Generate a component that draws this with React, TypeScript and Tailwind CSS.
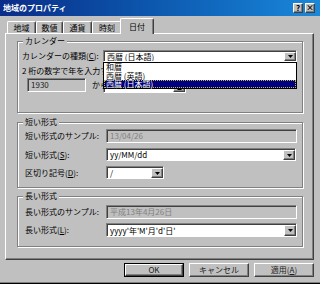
import React from 'react';

const raised =
  'border border-t-white border-l-white border-r-[#404040] border-b-[#404040] shadow-[inset_-1px_-1px_0_#808080]';
const sunken =
  'border border-t-[#808080] border-l-[#808080] border-r-white border-b-white shadow-[inset_1px_1px_0_#404040]';

const Arrow: React.FC = () => (
  <span className={`${raised} w-[12px] h-full bg-[#c0c0c0] flex items-center justify-center shrink-0`}>
    <svg width="5" height="3" viewBox="0 0 5 3">
      <polygon points="0,0 5,0 2.5,3" fill="#000" />
    </svg>
  </span>
);

const Combo: React.FC<{ value: string; className: string }> = ({ value, className }) => (
  <div className={`${sunken} bg-white flex items-stretch pt-px pl-px ${className}`}>
    <span className="flex-1 flex items-center pl-[2px] whitespace-nowrap overflow-hidden">{value}</span>
    <Arrow />
  </div>
);

const Field: React.FC<{ value: string; className: string; dim?: boolean }> = ({ value, className, dim }) => (
  <div
    className={`${sunken} bg-[#c0c0c0] flex items-center pl-[3px] whitespace-nowrap overflow-hidden ${
      dim ? 'text-[#808080]' : 'text-[#202020]'
    } ${className}`}
  >
    {value}
  </div>
);

const Group: React.FC<{ title: string; className: string; children: React.ReactNode }> = ({
  title,
  className,
  children,
}) => (
  <div className={`relative border border-[#808080] shadow-[inset_1px_1px_0_#fff,1px_1px_0_#fff] ${className}`}>
    <span className="absolute -top-[5px] left-[5px] px-[2px] bg-[#c0c0c0] leading-none">{title}</span>
    {children}
  </div>
);

const TitleBtn: React.FC<{ children: React.ReactNode }> = ({ children }) => (
  <span
    className={`${raised} w-[10px] h-[10px] bg-[#c0c0c0] flex items-center justify-center text-[8px] font-bold leading-none text-black`}
  >
    {children}
  </span>
);

const Button: React.FC<{ children: React.ReactNode; main?: boolean }> = ({ children, main }) => (
  <div className={main ? 'border border-black w-[60px]' : 'w-[60px]'}>
    <div className={`${raised} h-full bg-[#c0c0c0] flex items-center justify-center text-[#202020]`}>
      {children}
    </div>
  </div>
);

export default function App() {
  const tabs = [
    { label: '地域', w: 'w-[29px]' },
    { label: '数値', w: 'w-[27px]' },
    { label: '通貨', w: 'w-[29px]' },
    { label: '時刻', w: 'w-[30px]' },
  ];

  return (
    <div className="relative w-[320px] h-[284px] overflow-hidden bg-[#c0c0c0] flex flex-col text-[8px] leading-none text-black font-['Noto_Sans_CJK_JP','Noto_Sans',sans-serif] border-b border-b-black shadow-[inset_0_-1px_0_#808080]">
      {/* title bar */}
      <div className="h-[16px] bg-linear-to-r from-[#0b2c88] to-[#1a88da] flex items-center justify-between pl-[3px] pr-[5px] shrink-0">
        <span className="text-white font-bold">地域のプロパティ</span>
        <div className="flex gap-[2px]">
          <TitleBtn>?</TitleBtn>
          <TitleBtn>×</TitleBtn>
        </div>
      </div>

      {/* tabs */}
      <div className="mt-[2px] pl-[7px] h-[15px] flex items-end shrink-0">
        {tabs.map((t) => (
          <div
            key={t.label}
            className={`${t.w} h-[12px] border-t border-l border-r border-t-white border-l-white border-r-[#404040] shadow-[inset_-1px_0_0_#808080] rounded-t-[2px] flex items-center justify-center`}
          >
            {t.label}
          </div>
        ))}
        <div className="relative z-10 -ml-[2px] -mb-px w-[34px] h-[16px] bg-[#c0c0c0] border-t border-l border-r border-t-white border-l-white border-r-[#404040] shadow-[inset_-1px_0_0_#808080] rounded-t-[2px] flex items-center justify-center">
          日付
        </div>
      </div>

      {/* panel */}
      <div className="ml-[5px] w-[309px] h-[227px] shrink-0 border border-t-white border-l-white border-r-[#404040] border-b-[#404040] shadow-[inset_-1px_-1px_0_#808080] pl-[11px] pt-[7px] flex flex-col">
        <Group title="カレンダー" className="w-[286px] h-[72px]">
          <div className="mt-[8px] h-[12px] flex items-center pl-[4px]">
            <span className="w-[81px] whitespace-nowrap">
              カレンダーの種類(<u>C</u>):
            </span>
            <Combo value="西暦 (日本語)" className="w-[194px] h-[12px]" />
          </div>
          <div className="mt-[3px] h-[12px] flex items-center pl-[4px]">
            <span className="w-[81px] whitespace-nowrap overflow-hidden">
              2 桁の数字で年を入力すると、次の範囲の年として解釈します:
            </span>
          </div>
          <div className="mt-[1px] h-[14px] flex items-center pl-[9px]">
            <Field value="1930" className="w-[59px] h-[14px]" />
            <span className="ml-[6px] w-[11px] whitespace-nowrap overflow-hidden">から</span>
            <div className={`${sunken} w-[83px] h-[15px] bg-white flex items-stretch justify-end pt-px`}>
              <span className={`${raised} w-[12px] bg-[#c0c0c0] flex items-end justify-center pb-px`}>
                <svg width="5" height="3" viewBox="0 0 5 3">
                  <polygon points="2.5,0 5,3 0,3" fill="#000" />
                </svg>
              </span>
            </div>
          </div>
        </Group>

        <Group title="短い形式" className="mt-[9px] w-[286px] h-[66px]">
          <div className="mt-[6px] h-[14px] flex items-center pl-[7px]">
            <span className="w-[81px] whitespace-nowrap">短い形式のサンプル:</span>
            <Field value="13/04/26" dim className="w-[191px] h-[14px]" />
          </div>
          <div className="mt-[5px] h-[13px] flex items-center pl-[7px]">
            <span className="w-[81px] whitespace-nowrap">
              短い形式(<u>S</u>):
            </span>
            <Combo value="yy/MM/dd" className="w-[190px] h-[13px]" />
          </div>
          <div className="mt-[5px] h-[13px] flex items-center pl-[7px]">
            <span className="w-[81px] whitespace-nowrap">
              区切り記号(<u>D</u>):
            </span>
            <Combo value="/" className="w-[58px] h-[13px]" />
          </div>
        </Group>

        <Group title="長い形式" className="mt-[8px] w-[286px] h-[51px]">
          <div className="mt-[8px] h-[14px] flex items-center pl-[7px]">
            <span className="w-[81px] whitespace-nowrap">長い形式のサンプル:</span>
            <Field value="平成13年4月26日" dim className="w-[191px] h-[14px]" />
          </div>
          <div className="mt-[4px] h-[14px] flex items-center pl-[7px]">
            <span className="w-[81px] whitespace-nowrap">
              長い形式(<u>L</u>):
            </span>
            <Combo value="yyyy'年'M'月'd'日'" className="w-[191px] h-[14px]" />
          </div>
        </Group>
      </div>

      {/* buttons */}
      <div className="mt-[3px] h-[14px] flex justify-end gap-[5px] pr-[6px] shrink-0">
        <Button main>OK</Button>
        <Button>キャンセル</Button>
        <Button>
          適用(<u>A</u>)
        </Button>
      </div>

      {/* open dropdown list */}
      <div className="absolute left-[103px] top-[62px] w-[194px] h-[27px] bg-white border border-black flex flex-col whitespace-nowrap">
        <div className="h-[8px] flex items-center pl-[2px]">和暦</div>
        <div className="h-[9px] flex items-center pl-[2px]">西暦 (英語)</div>
        <div className="h-[8px] flex items-center pl-[2px] bg-[#000080] text-white outline-1 outline-dotted outline-[#c0c040] -outline-offset-1">
          西暦 (日本語)
        </div>
      </div>
    </div>
  );
}
